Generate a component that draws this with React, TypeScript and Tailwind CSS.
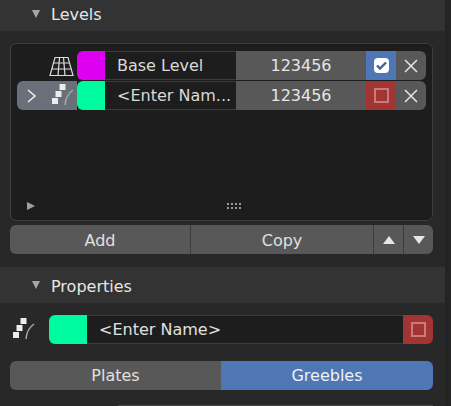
const dark = "bg-[#1d1d1d]";

function Grid() {
  return (
    <svg width="26" height="22" viewBox="0 0 26 22" fill="none" stroke="#dcdcdc" strokeWidth="1.2">
      <path d="M6 2.5H19L24 20.5H1Z" />
      <path d="M4.5 8H20.5M2.8 14H22.2M10.5 2.5L9 20.5M14.5 2.5L16 20.5" />
    </svg>
  );
}

function Greeble() {
  return (
    <svg width="24" height="25" viewBox="0 0 24 25" fill="none">
      <rect x="8.5" y="1" width="6" height="6" fill="#ececec" />
      <rect x="4.5" y="8" width="6" height="6" fill="#ececec" />
      <rect x="1" y="15" width="6" height="6" fill="#ececec" />
      <path d="M14 22C14.5 15 17 10.5 22 7" stroke="#a8a8a8" strokeWidth="1.5" />
    </svg>
  );
}

function Check({ on, red }: { on?: boolean; red?: boolean }) {
  return (
    <div className={`flex items-center justify-center ${red ? "bg-[#a33434]" : "bg-[#4f77b5]"} w-[30px] h-full`}>
      {on ? (
        <div className="w-[15px] h-[15px] rounded-sm bg-white flex items-center justify-center">
          <svg width="13" height="13" viewBox="0 0 13 13" fill="none">
            <path d="M2 6.5L5 9.5L11 3.5" stroke="#3f6299" strokeWidth="2.4" />
          </svg>
        </div>
      ) : (
        <div className="w-[15px] h-[15px] border-2 border-[#c97a7a]" />
      )}
    </div>
  );
}

function Cross() {
  return (
    <svg width="14" height="14" viewBox="0 0 14 14" fill="none" stroke="#e6e6e6" strokeWidth="1.5">
      <path d="M1 1L13 13M13 1L1 13" />
    </svg>
  );
}

function Row({ color, name, on, active, icon }: { color: string; name: string; on?: boolean; active?: boolean; icon: React.ReactNode }) {
  return (
    <div className="flex h-[29px] items-stretch">
      <div className={`w-[60px] shrink-0 flex items-center rounded-l-md ${active ? "bg-[#6a7079]" : ""}`}>
        <svg className={active ? "ml-[9px]" : "invisible ml-[9px]"} width="11" height="14" viewBox="0 0 11 14" fill="none" stroke="#f0f0f0" strokeWidth="1.5">
          <path d="M2 1L9 7L2 13" />
        </svg>
        <span className="ml-auto mr-[2px] flex items-center">{icon}</span>
      </div>
      <div className={`w-[28px] shrink-0 rounded-l-md ${color}`} />
      <div className={`w-[131px] shrink-0 ${dark} border-y border-[#3b3b3b] pl-3 flex items-center text-[#d9d9d9] whitespace-nowrap overflow-hidden`}>{name}</div>
      <div className="w-[130px] shrink-0 bg-[#585858] flex items-center justify-center text-[#e6e6e6]">123456</div>
      <Check on={on} red={!on} />
      <div className="w-[30px] shrink-0 bg-[#585858] rounded-r-md flex items-center justify-center"><Cross /></div>
    </div>
  );
}

export default function App() {
  return (
    <div className="w-[451px] h-[406px] overflow-hidden bg-[#282828] font-['DejaVu_Sans',sans-serif] text-[16px] flex">
      <div className="w-[445px] shrink-0">
        <div className="h-[31px] bg-[#333333] flex items-center pl-[32px] gap-[11px] text-[#e6e6e6]">
          <span className="-mt-[3px] w-0 h-0 border-l-[4px] border-r-[4px] border-t-[8px] border-l-transparent border-r-transparent border-t-[#a6a6a6]" />
          <span className="pb-[2px]">Levels</span>
        </div>
        <div className="pl-[10px] pr-[12px] pt-[12px]">
          <div className={`${dark} border border-[#3d3d3d] rounded-md h-[178px] px-[6px] pt-[7px] flex flex-col`}>
            <Row color="bg-[#de00f0]" name="Base Level" on icon={<Grid />} />
            <div className="h-px" />
            <Row color="bg-[#00fa9f]" name="<Enter Nam..." active icon={<Greeble />} />
            <div className="mt-auto mb-[6px] flex items-center relative h-4">
              <span className="ml-[10px] w-0 h-0 border-t-[4px] border-b-[4px] border-l-[8px] border-t-transparent border-b-transparent border-l-[#a0a0a0]" />
              <span className="absolute left-[210px] grid grid-cols-4 gap-[2px]">
                {Array.from({ length: 8 }).map((_, i) => (
                  <span key={i} className="w-[2px] h-[2px] bg-[#9a9a9a]" />
                ))}
              </span>
            </div>
          </div>
          <div className="mt-1 flex h-[29px] text-[#e0e0e0] rounded-md overflow-hidden">
            <div className="w-[180px] shrink-0 bg-[#585858] flex items-center justify-center pt-[2px]">Add</div>
            <div className="w-[183px] shrink-0 bg-[#585858] flex items-center justify-center border-l border-[#3c3c3c] pt-[2px]">Copy</div>
            <div className="w-[30px] shrink-0 bg-[#585858] border-l border-[#3c3c3c] flex items-center justify-center">
              <span className="w-0 h-0 border-l-[6px] border-r-[6px] border-b-[8px] border-l-transparent border-r-transparent border-b-[#e6e6e6]" />
            </div>
            <div className="w-[30px] shrink-0 bg-[#585858] border-l border-[#3c3c3c] flex items-center justify-center">
              <span className="w-0 h-0 border-l-[6px] border-r-[6px] border-t-[8px] border-l-transparent border-r-transparent border-t-[#e6e6e6]" />
            </div>
          </div>
        </div>
        <div className="mt-[13px] h-9 bg-[#333333] flex items-center pl-[32px] gap-[11px] text-[#e6e6e6]">
          <span className="w-0 h-0 border-l-[4px] border-r-[4px] border-t-[8px] border-l-transparent border-r-transparent border-t-[#a6a6a6]" />
          <span className="pt-[3px]">Properties</span>
        </div>
        <div className="pl-[10px] pr-[12px] pt-[12px]">
          <div className="flex h-[29px] items-stretch">
            <div className="w-[39px] flex items-center pl-[2px]"><Greeble /></div>
            <div className="w-[38px] rounded-l-md bg-[#00fa9f]" />
            <div className={`flex-1 ${dark} border-y border-[#3b3b3b] pl-[12px] flex items-center text-[#e0e0e0]`}>{"<Enter Name>"}</div>
            <div className="w-[30px] rounded-r-md bg-[#a33434] flex items-center justify-center">
              <div className="w-[15px] h-[15px] border-2 border-[#c97a7a]" />
            </div>
          </div>
          <div className="mt-[17px] flex h-[29px] rounded-md overflow-hidden">
            <div className="w-[211px] bg-[#585858] text-[#e0e0e0] flex items-center justify-center">Plates</div>
            <div className="flex-1 bg-[#4f77b5] text-[#f0f0f0] flex items-center justify-center">Greebles</div>
          </div>
          <div className="mt-[15px] ml-[108px] h-px bg-[#4a4a4a]" />
        </div>
      </div>
      <div className="flex-1 bg-[#242424]" />
    </div>
  );
}
